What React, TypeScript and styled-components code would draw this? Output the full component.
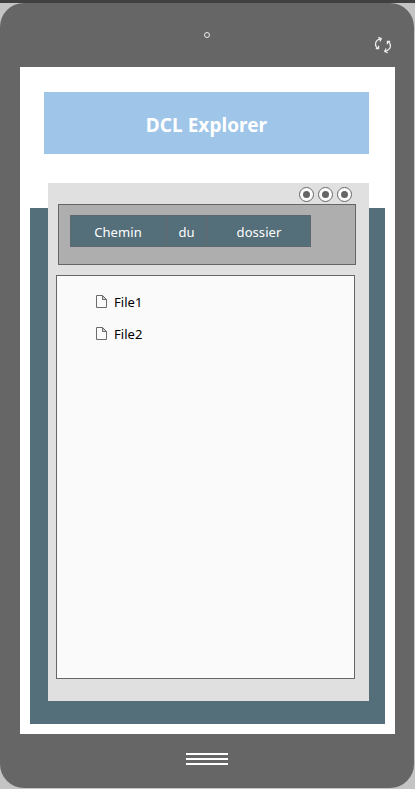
import React from "react";
import styled, { createGlobalStyle } from "styled-components";

const GlobalStyle = createGlobalStyle`
  *, *::before, *::after { box-sizing: border-box; }
  body { margin: 0; background: #c4c4c4; overflow: hidden; }
`;

const Page = styled.div`
  width: 415px;
  height: 789px;
  padding: 0 1px 1px 0;
  border-top: 3px solid #404040;
  background: #c4c4c4;
  font-family: "Noto Sans", "Open Sans", sans-serif;
`;

const Phone = styled.main`
  height: 785px;
  display: grid;
  grid-template-rows: 64px 667px 1fr;
  padding: 0 19px 0 20px;
  border-radius: 24px;
  background: #666;
`;

const PhoneTop = styled.header`
  display: grid;
  grid-template-columns: 184px 6px 1fr;
  align-items: start;
  padding-top: 29px;
`;

const Camera = styled.span`
  grid-column: 2;
  width: 6px;
  height: 6px;
  border: 1px solid #eee;
  border-radius: 50%;
`;

const RefreshIcon = styled.svg`
  justify-self: end;
  width: 18px;
  height: 18px;
  margin: 4px 3px 0 0;
`;

const Screen = styled.section`
  padding: 25px 10px 10px;
  background: #fff;
`;

const Title = styled.h1`
  display: flex;
  align-items: center;
  justify-content: center;
  height: 62px;
  margin: 0 16px 54px 14px;
  padding-top: 4px;
  background: #9fc5e8;
  color: #fff;
  font-size: 19px;
  font-weight: 700;
  line-height: 26px;
  letter-spacing: 0.04px;
`;

const Backdrop = styled.div`
  height: 516px;
  display: flow-root;
  padding: 0 16px 0 18px;
  background: #546e7a;
`;

const ExplorerWindow = styled.div`
  height: 518px;
  margin-top: -25px;
  padding: 4px 13px 22px 8px;
  background: #e0e0e0;
`;

const WindowButtons = styled.div`
  display: flex;
  justify-content: flex-end;
  gap: 4px;
  height: 17px;
  padding-right: 4px;
`;

const WindowButton = styled.span`
  display: grid;
  place-items: center;
  width: 15px;
  height: 15px;
  border: 1px solid #666;
  border-radius: 50%;
  background: #fff;

  &::after {
    content: "";
    width: 7.6px;
    height: 7.6px;
    border-radius: 50%;
    background: #666;
  }
`;

const PathBar = styled.nav`
  width: 298px;
  height: 61px;
  margin-left: 2px;
  padding: 10px 11px;
  border: 1px solid #666;
  background: #aeaeae;
`;

const Path = styled.div`
  display: flex;
  width: 241px;
  height: 32px;
  border: 1px solid #5d696e;
  background: #546e7a;
`;

const PathPart = styled.span<{ $width: number; $start?: number; $end?: number }>`
  width: ${({ $width }) => $width}px;
  padding-left: ${({ $start = 0 }) => $start}px;
  padding-right: ${({ $end = 0 }) => $end}px;
  color: #fff;
  font-size: 13px;
  line-height: 33px;
  letter-spacing: 0.07px;
  text-align: center;

  & + & { border-left: 1px solid #68696a; }
`;

const FileList = styled.ul`
  width: 299px;
  height: 404px;
  margin: 10px 0 0;
  padding: 10px 38px;
  border: 1px solid #666;
  background: #fafafa;
  list-style: none;
`;

const FileRow = styled.li`
  display: flex;
  align-items: center;
  gap: 6px;
  height: 32px;
  color: #000;
  font-size: 13px;
  letter-spacing: 0.05px;
`;

const FileIcon = styled.svg`
  width: 13px;
  height: 14px;
  margin-bottom: 2px;
`;

const MenuBars = styled.footer`
  display: flex;
  flex-direction: column;
  align-items: flex-start;
  gap: 3px;
  padding: 19px 0 0 166px;
`;

const MenuBar = styled.span`
  width: 42px;
  height: 2px;
  background: #fff;
`;

const pathParts = [
  { text: "Chemin", width: 95, end: 1 },
  { text: "du", width: 40 },
  { text: "dossier", width: 104, start: 1 },
];

export default function App() {
  return (
    <>
      <GlobalStyle />
      <Page>
        <Phone>
          <PhoneTop>
            <Camera />
            <RefreshIcon viewBox="0 0 18 18" fill="none" stroke="#eee" strokeWidth="1.2" aria-label="Refresh">
              <path d="M4 12.5C0.2 9.8 0.5 4.5 6.7 2.7M4.3 1.3l3 1.2-1.4 3M1.8 12.6h2.8V9.7" />
              <path d="M14 5.5C17.8 8.2 17.5 13.5 11.3 15.3M13.7 16.7l-3-1.2 1.4-3M16.2 5.4h-2.8v2.9" />
            </RefreshIcon>
          </PhoneTop>
          <Screen>
            <Title>DCL Explorer</Title>
            <Backdrop>
              <ExplorerWindow>
                <WindowButtons>
                  <WindowButton /><WindowButton /><WindowButton />
                </WindowButtons>
                <PathBar>
                  <Path>
                    {pathParts.map((part) => (
                      <PathPart key={part.text} $width={part.width} $start={part.start} $end={part.end}>
                        {part.text}
                      </PathPart>
                    ))}
                  </Path>
                </PathBar>
                <FileList>
                  {["File1", "File2"].map((name) => (
                    <FileRow key={name}>
                      <FileIcon viewBox="0 0 13 14" fill="none" stroke="#6b6b6b">
                        <path d="M1.5 1.5h6l4 4v8h-10z" />
                        <path d="M7.5 1.5v4h4z" fill="#ccc" />
                      </FileIcon>
                      {name}
                    </FileRow>
                  ))}
                </FileList>
              </ExplorerWindow>
            </Backdrop>
          </Screen>
          <MenuBars><MenuBar /><MenuBar /><MenuBar /></MenuBars>
        </Phone>
      </Page>
    </>
  );
}
